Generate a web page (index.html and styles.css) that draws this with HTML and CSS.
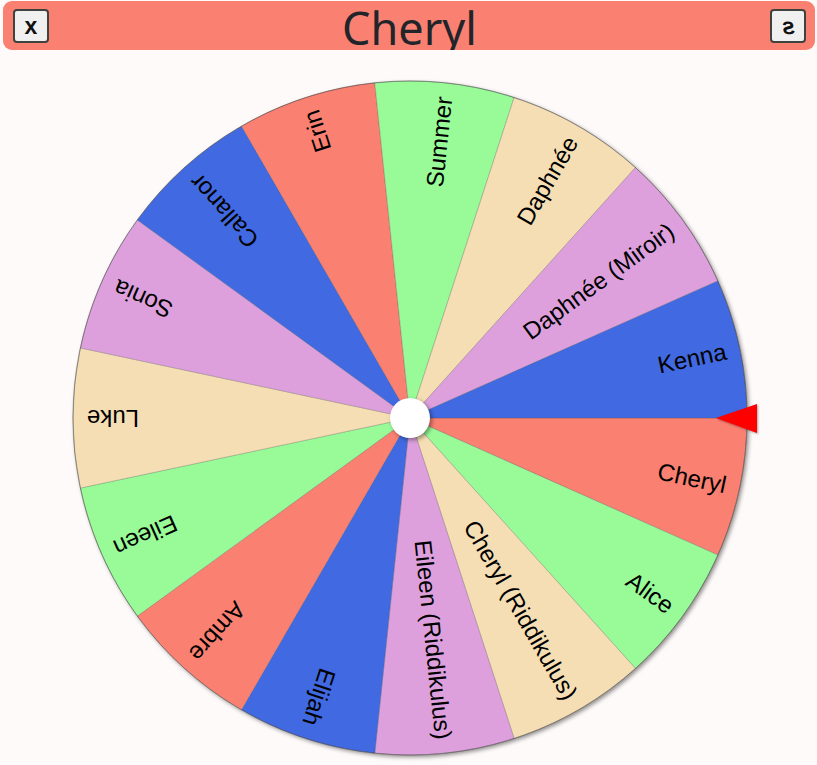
FILE: index.html
```html
<!DOCTYPE html>
<html lang="fr">
<head>
  <meta charset="UTF-8" />
  <meta name="viewport" content="width=device-width, initial-scale=1.0" />
  <title>Roue - Cheryl</title>
  <link rel="stylesheet" href="styles.css">
</head>
<body>

  <header class="topbar">
    <button class="tool-btn" title="Fermer">x</button>
    <h1 class="winner">Cheryl</h1>
    <button class="tool-btn" title="Mélanger"><span class="flip">s</span></button>
  </header>

  <main class="stage">
    <svg class="wheel" width="817" height="715" viewBox="-410 -368 817 715">
      <defs>
        <path id="wedge" d="M0 0L337 0A337 337 0 0 1 307.86 137.07Z" />
      </defs>

      <!-- fond + ombre de la roue -->
      <circle class="rim-shadow" r="337" />

      <g class="slices">
        <g transform="rotate(0)"><use href="#wedge" class="c-salmon" /><text transform="rotate(12)" x="323">Cheryl</text></g>
        <g transform="rotate(24)"><use href="#wedge" class="c-green" /><text transform="rotate(12)" x="323">Alice</text></g>
        <g transform="rotate(48)"><use href="#wedge" class="c-wheat" /><text transform="rotate(12)" x="323">Cheryl (Riddikulus)</text></g>
        <g transform="rotate(72)"><use href="#wedge" class="c-plum" /><text transform="rotate(12)" x="323">Eileen (Riddikulus)</text></g>
        <g transform="rotate(96)"><use href="#wedge" class="c-blue" /><text transform="rotate(12)" x="323">Elijah</text></g>
        <g transform="rotate(120)"><use href="#wedge" class="c-salmon" /><text transform="rotate(12)" x="323">Ambre</text></g>
        <g transform="rotate(144)"><use href="#wedge" class="c-green" /><text transform="rotate(12)" x="323">Eileen</text></g>
        <g transform="rotate(168)"><use href="#wedge" class="c-wheat" /><text transform="rotate(12)" x="323">Luke</text></g>
        <g transform="rotate(192)"><use href="#wedge" class="c-plum" /><text transform="rotate(12)" x="323">Sonia</text></g>
        <g transform="rotate(216)"><use href="#wedge" class="c-blue" /><text transform="rotate(12)" x="323">Callanor</text></g>
        <g transform="rotate(240)"><use href="#wedge" class="c-salmon" /><text transform="rotate(12)" x="323">Erin</text></g>
        <g transform="rotate(264)"><use href="#wedge" class="c-green" /><text transform="rotate(12)" x="323">Summer</text></g>
        <g transform="rotate(288)"><use href="#wedge" class="c-wheat" /><text transform="rotate(12)" x="323">Daphnée</text></g>
        <g transform="rotate(312)"><use href="#wedge" class="c-plum" /><text transform="rotate(12)" x="323">Daphnée (Miroir)</text></g>
        <g transform="rotate(336)"><use href="#wedge" class="c-blue" /><text transform="rotate(12)" x="323">Kenna</text></g>
      </g>

      <circle class="rim" r="337" />
      <circle class="hub" r="20" />
      <polygon class="pointer" points="306,0 347,-14 347,15" />
    </svg>
  </main>

</body>
</html>
```

FILE: styles.css
```css
* {
  margin: 0;
  padding: 0;
  box-sizing: border-box;
}

body {
  background: #fffafa;
  font-family: 'Liberation Sans', Arial, sans-serif;
  color: #212529;
}

.topbar {
  margin: 1px 2px 0 3px;
  height: 49px;
  background: #fa8072;
  border-radius: 9px;
  padding: 0 9px 0 10px;
  display: flex;
  justify-content: space-between;
  align-items: center;
  overflow: hidden;
}

.winner {
  font-family: 'Noto Sans', 'Open Sans', sans-serif;
  font-weight: 400;
  font-size: 45px;
  line-height: 53px;
  align-self: flex-start;
  color: #212529;
}

.tool-btn {
  width: 36px;
  height: 34px;
  margin-top: 1px;
  background: #f0f0f0;
  border: 2px solid #3f423d;
  border-radius: 4px;
  font-family: 'Liberation Sans', Arial, sans-serif;
  font-weight: 700;
  font-size: 23px;
  line-height: 1;
  color: #111;
  cursor: pointer;
}

.flip {
  display: inline-block;
  transform: scaleX(-1) skewX(-8deg);
}

.stage {
  display: flex;
  justify-content: center;
}

.wheel {
  display: block;
}

.rim-shadow {
  fill: #fff;
  filter: drop-shadow(2px 2px 2px rgba(0, 0, 0, 0.45));
}

.rim {
  fill: none;
  stroke: rgba(60, 60, 60, 0.5);
  stroke-width: 1;
}

.slices use {
  stroke: rgba(80, 80, 80, 0.3);
  stroke-width: 0.8;
}

.slices text {
  font-family: 'Liberation Sans', Arial, sans-serif;
  font-size: 24px;
  fill: #000;
  text-anchor: end;
  dominant-baseline: central;
}

.c-salmon { fill: #fa8072; }
.c-green { fill: #98fb98; }
.c-wheat { fill: #f5deb3; }
.c-plum { fill: #dda0dd; }
.c-blue { fill: #4169e1; }

.hub {
  fill: #fff;
  filter: drop-shadow(2px 2px 2px rgba(0, 0, 0, 0.4));
}

.pointer {
  fill: #ff0000;
  filter: drop-shadow(1px 1px 1px rgba(0, 0, 0, 0.35));
}
```
